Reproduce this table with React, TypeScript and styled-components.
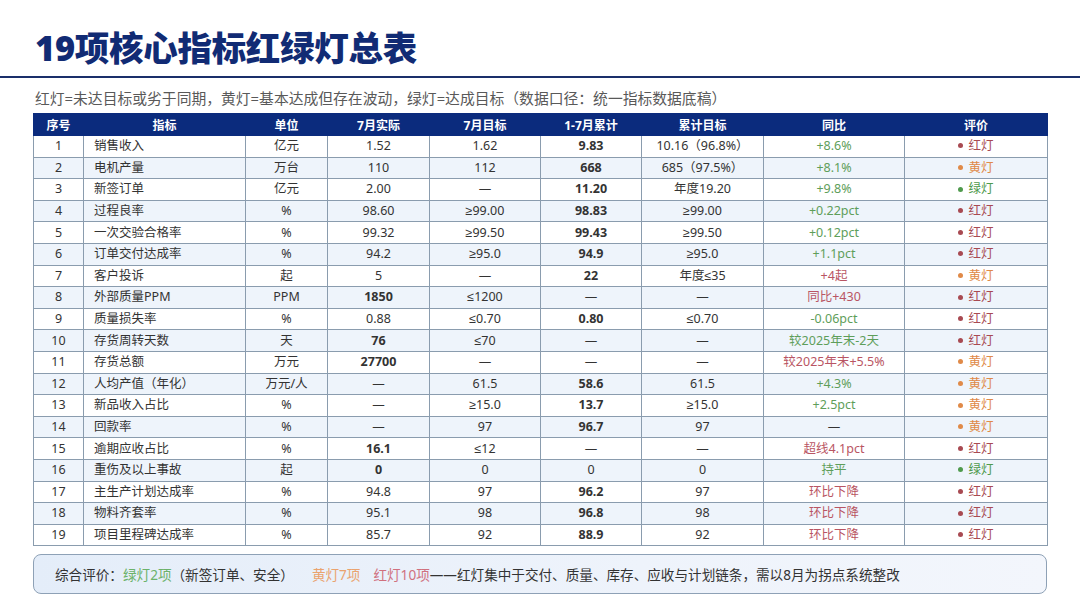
import React from "react";
import styled, { createGlobalStyle } from "styled-components";

const Global = createGlobalStyle`
  html, body { margin: 0; padding: 0; background: #ffffff; }
  body { font-family: "Noto Sans", "Liberation Sans", "Noto Sans CJK SC", sans-serif; color: #333; }
`;

const Page = styled.div`
  width: 1080px;
  height: 608px;
  background: #fff;
  overflow: hidden;
  display: flex;
  flex-direction: column;
`;

const Title = styled.h1`
  margin: 0;
  padding: 26px 35px 0;
  font-family: "Noto Sans", "Noto Sans CJK SC", sans-serif;
  font-size: 34.5px;
  line-height: 44px;
  font-weight: 900;
  color: #112b74;
  letter-spacing: -0.3px;
`;

const Rule = styled.div`
  margin-top: 6px;
  height: 2px;
  background: #1a2f6a;
`;

const Legend = styled.div`
  margin: 10px 35px 0;
  font-size: 14.8px;
  line-height: 20px;
  color: #595959;
`;

const Table = styled.table`
  margin: 5px 0 0 33px;
  width: 1014px;
  border-collapse: collapse;
  table-layout: fixed;
  font-size: 12.5px;
`;

const HeadCell = styled.th`
  height: 21px;
  padding: 0;
  background: #0b2b7d;
  color: #fff;
  font-weight: 700;
  font-size: 12px;
  text-align: center;
  border: 1px solid #0b2b7d;
  border-left-color: #4d6bb0;
  &:first-child { border-left-color: #0b2b7d; }
`;

const Row = styled.tr<{ $alt: boolean }>`
  background: ${(p) => (p.$alt ? "#eef4fb" : "#ffffff")};
`;

const Cell = styled.td<{ $align?: "left" | "center"; $bold?: boolean; $tone?: string }>`
  height: 20.6px;
  padding: 0;
  padding-left: ${(p) => (p.$align === "left" ? "10px" : "0")};
  text-align: ${(p) => p.$align ?? "center"};
  font-weight: ${(p) => (p.$bold ? 700 : 400)};
  color: ${(p) => p.$tone ?? "#333"};
  border: 1px solid #8a9cae;
  white-space: nowrap;
  line-height: 20px;
`;

const Dot = styled.span<{ $c: string }>`
  display: inline-block;
  width: 5px;
  height: 5px;
  border-radius: 50%;
  background: ${(p) => p.$c};
  margin-right: 5px;
  vertical-align: middle;
  position: relative;
  top: -1px;
`;

const Footer = styled.div`
  margin: 8px 0 0 33px;
  width: 1014px;
  height: 40px;
  box-sizing: border-box;
  border: 1px solid #8ea1b6;
  border-radius: 8px;
  background: linear-gradient(90deg, #e4edf9 0%, #eef3fb 60%, #f3f6fc 100%);
  display: flex;
  align-items: center;
  padding-left: 21px;
  font-size: 13.6px;
  color: #333;
  white-space: nowrap;
`;

const Tone = styled.span<{ $c: string; $gap?: number }>`
  color: ${(p) => p.$c};
  margin-left: ${(p) => p.$gap ?? 0}px;
`;

const GREEN = "#5e9e5a";
const RED = "#b95563";
const LIGHT_RED = "#a84a52";
const LIGHT_GREEN = "#4f9a4d";
const LIGHT_ORANGE = "#e08a48";

type Lamp = "红" | "黄" | "绿";
type R = [string, string, string, string, string, string, string, string, "g" | "r" | "n", Lamp, number];

const rows: R[] = [
  ["1", "销售收入", "亿元", "1.52", "1.62", "9.83", "10.16（96.8%）", "+8.6%", "g", "红", 2],
  ["2", "电机产量", "万台", "110", "112", "668", "685（97.5%）", "+8.1%", "g", "黄", 2],
  ["3", "新签订单", "亿元", "2.00", "—", "11.20", "年度19.20", "+9.8%", "g", "绿", 2],
  ["4", "过程良率", "%", "98.60", "≥99.00", "98.83", "≥99.00", "+0.22pct", "g", "红", 2],
  ["5", "一次交验合格率", "%", "99.32", "≥99.50", "99.43", "≥99.50", "+0.12pct", "g", "红", 2],
  ["6", "订单交付达成率", "%", "94.2", "≥95.0", "94.9", "≥95.0", "+1.1pct", "g", "红", 2],
  ["7", "客户投诉", "起", "5", "—", "22", "年度≤35", "+4起", "r", "黄", 2],
  ["8", "外部质量PPM", "PPM", "1850", "≤1200", "—", "—", "同比+430", "r", "红", 1],
  ["9", "质量损失率", "%", "0.88", "≤0.70", "0.80", "≤0.70", "-0.06pct", "g", "红", 2],
  ["10", "存货周转天数", "天", "76", "≤70", "—", "—", "较2025年末-2天", "g", "红", 1],
  ["11", "存货总额", "万元", "27700", "—", "—", "—", "较2025年末+5.5%", "r", "黄", 1],
  ["12", "人均产值（年化）", "万元/人", "—", "61.5", "58.6", "61.5", "+4.3%", "g", "黄", 2],
  ["13", "新品收入占比", "%", "—", "≥15.0", "13.7", "≥15.0", "+2.5pct", "g", "黄", 2],
  ["14", "回款率", "%", "—", "97", "96.7", "97", "—", "n", "黄", 2],
  ["15", "逾期应收占比", "%", "16.1", "≤12", "—", "—", "超线4.1pct", "r", "红", 1],
  ["16", "重伤及以上事故", "起", "0", "0", "0", "0", "持平", "g", "绿", 1],
  ["17", "主生产计划达成率", "%", "94.8", "97", "96.2", "97", "环比下降", "r", "红", 2],
  ["18", "物料齐套率", "%", "95.1", "98", "96.8", "98", "环比下降", "r", "红", 2],
  ["19", "项目里程碑达成率", "%", "85.7", "92", "88.9", "92", "环比下降", "r", "红", 2],
];

const heads = ["序号", "指标", "单位", "7月实际", "7月目标", "1-7月累计", "累计目标", "同比", "评价"];
const widths = [50, 162, 82, 102, 111, 101, 122, 141, 143];

const toneOf = (t: "g" | "r" | "n") => (t === "g" ? GREEN : t === "r" ? RED : "#333");
const lampColor = (l: Lamp) => (l === "红" ? LIGHT_RED : l === "黄" ? LIGHT_ORANGE : LIGHT_GREEN);

export default function App() {
  return (
    <Page>
      <Global />
      <Title>19项核心指标红绿灯总表</Title>
      <Rule />
      <Legend>红灯=未达目标或劣于同期，黄灯=基本达成但存在波动，绿灯=达成目标（数据口径：统一指标数据底稿）</Legend>
      <Table>
        <colgroup>
          {widths.map((w, i) => (
            <col key={i} style={{ width: w }} />
          ))}
        </colgroup>
        <thead>
          <tr>
            {heads.map((h) => (
              <HeadCell key={h}>{h}</HeadCell>
            ))}
          </tr>
        </thead>
        <tbody>
          {rows.map((r, i) => (
            <Row key={r[0]} $alt={i % 2 === 1}>
              <Cell>{r[0]}</Cell>
              <Cell $align="left">{r[1]}</Cell>
              <Cell>{r[2]}</Cell>
              <Cell $bold={r[10] === 1 && r[3] !== "—"}>{r[3]}</Cell>
              <Cell>{r[4]}</Cell>
              <Cell $bold={r[10] === 2}>{r[5]}</Cell>
              <Cell>{r[6]}</Cell>
              <Cell $tone={toneOf(r[8])}>{r[7]}</Cell>
              <Cell $tone={lampColor(r[9])}>
                <Dot $c={lampColor(r[9])} />
                {r[9]}灯
              </Cell>
            </Row>
          ))}
        </tbody>
      </Table>
      <Footer>
        <span>综合评价：</span>
        <Tone $c="#6cb26a">绿灯2项</Tone>
        <span>（新签订单、安全）</span>
        <Tone $c="#eaa36e" $gap={18}>黄灯7项</Tone>
        <Tone $c="#d0707e" $gap={13}>红灯10项</Tone>
        <span>——红灯集中于交付、质量、库存、应收与计划链条，需以8月为拐点系统整改</span>
      </Footer>
    </Page>
  );
}
